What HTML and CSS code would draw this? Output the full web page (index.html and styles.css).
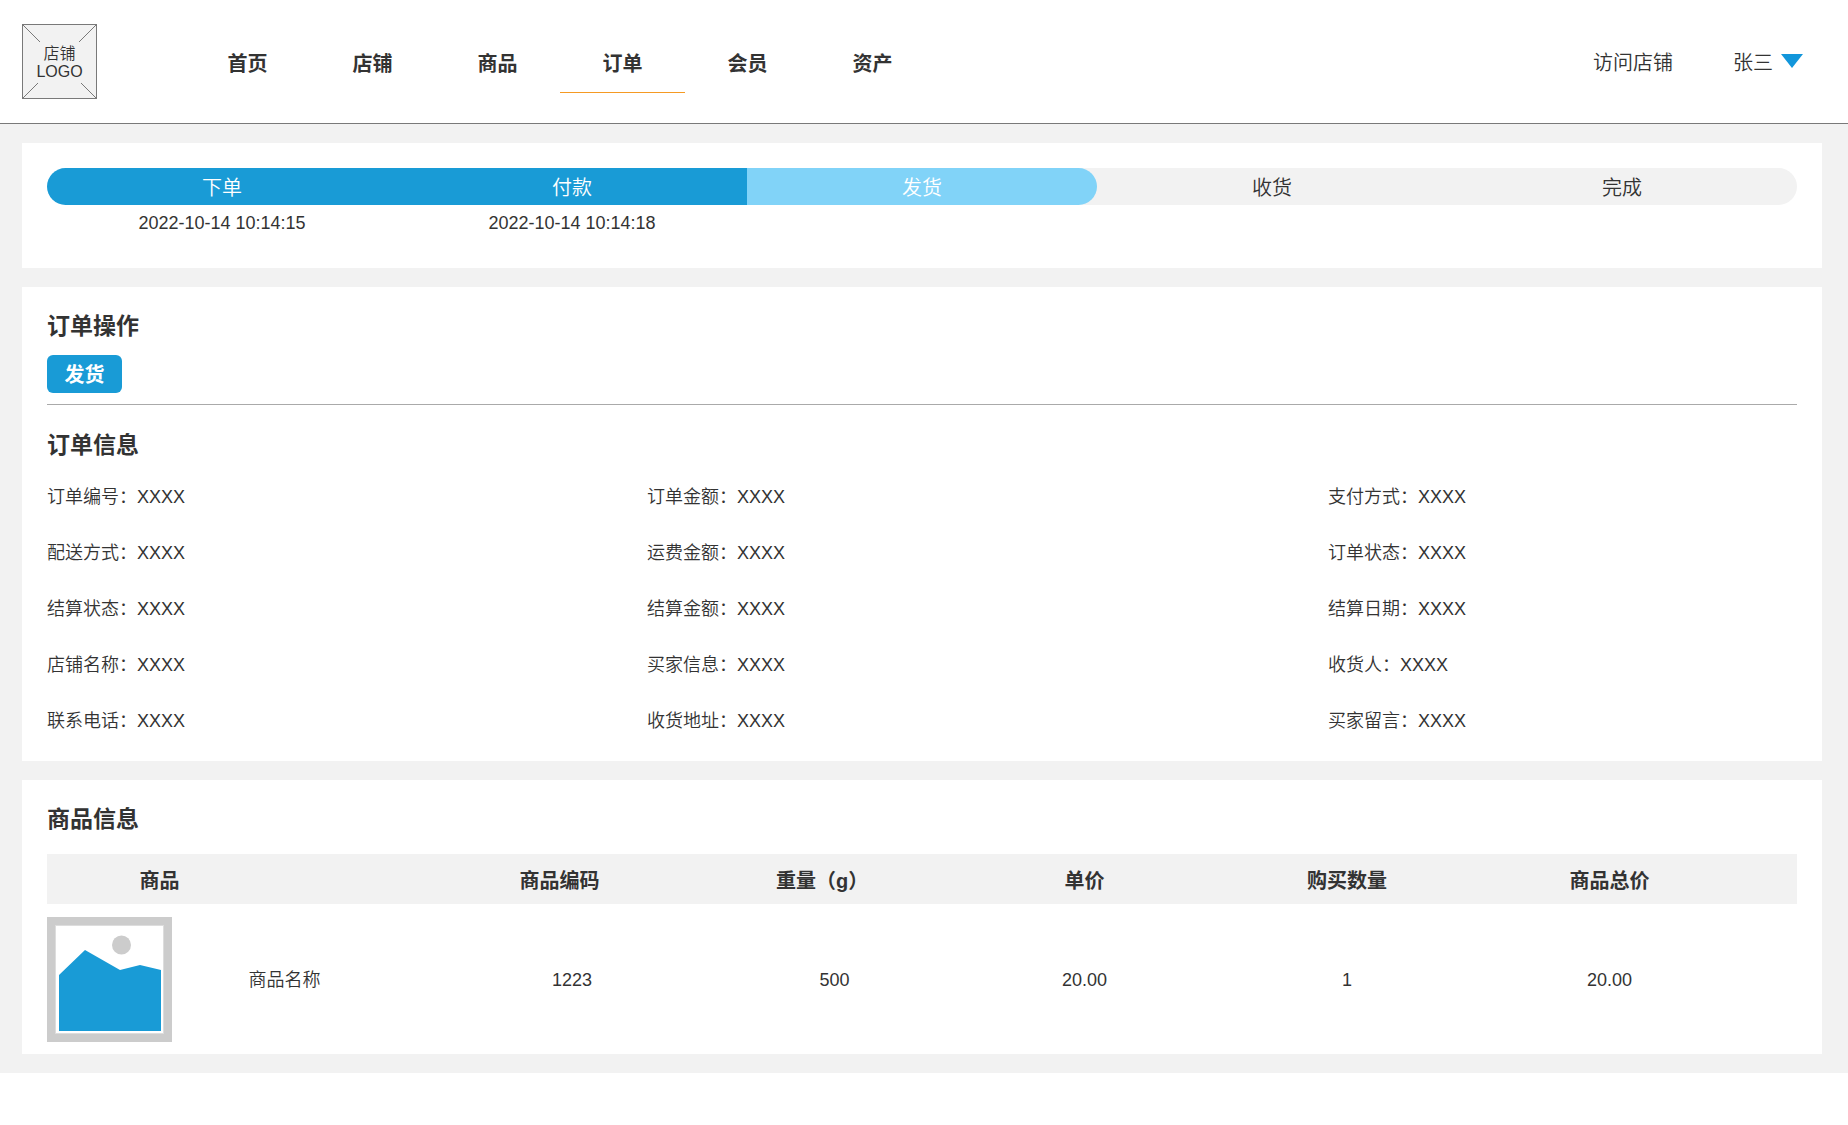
FILE: index.html
```html
<!DOCTYPE html>
<html lang="zh-CN">
<head>
<meta charset="utf-8">
<meta name="viewport" content="width=device-width, initial-scale=1">
<title>订单详情</title>
<link rel="stylesheet" href="styles.css">
</head>
<body>
<header class="header">
  <a class="logo" href="#">
    <svg class="logo__frame" viewBox="0 0 75 75" aria-hidden="true">
      <rect x="0.5" y="0.5" width="74" height="74" fill="#f2f2f2" stroke="#797979"/>
      <path d="M.5.5 18 18M74.500.5 57 18M.5 74.500 16 59M74.500 74.500 59 59" fill="none" stroke="#797979"/>
    </svg>
    <span class="logo__text">店铺<br>LOGO</span>
  </a>
  <nav class="nav">
    <a class="nav__link" href="#">首页</a>
    <a class="nav__link" href="#">店铺</a>
    <a class="nav__link" href="#">商品</a>
    <a class="nav__link nav__link--active" href="#" aria-current="page">订单</a>
    <a class="nav__link" href="#">会员</a>
    <a class="nav__link" href="#">资产</a>
  </nav>
  <div class="account">
    <a class="account__shop" href="#">访问店铺</a>
    <button class="account__user" type="button">张三
      <svg class="account__arrow" viewBox="0 0 22 14" aria-hidden="true"><path d="M0 0H22L11 14Z" fill="#1296db"/></svg>
    </button>
  </div>
</header>

<main class="main">
  <section class="card card--steps">
    <ol class="steps">
      <li class="step step--done"><div class="step__bar"><span class="step__name">下单</span></div><time class="step__time">2022-10-14 10:14:15</time></li>
      <li class="step step--done"><div class="step__bar"><span class="step__name">付款</span></div><time class="step__time">2022-10-14 10:14:18</time></li>
      <li class="step step--current"><div class="step__bar"><span class="step__name">发货</span></div></li>
      <li class="step"><div class="step__bar"><span class="step__name">收货</span></div></li>
      <li class="step"><div class="step__bar"><span class="step__name">完成</span></div></li>
    </ol>
  </section>

  <section class="card card--order">
    <div class="actions">
      <h2 class="title">订单操作</h2>
      <button class="button" type="button">发货</button>
    </div>
    <h2 class="title">订单信息</h2>
    <dl class="info">
      <div class="info__item"><dt>订单编号：</dt><dd>XXXX</dd></div>
      <div class="info__item"><dt>订单金额：</dt><dd>XXXX</dd></div>
      <div class="info__item"><dt>支付方式：</dt><dd>XXXX</dd></div>
      <div class="info__item"><dt>配送方式：</dt><dd>XXXX</dd></div>
      <div class="info__item"><dt>运费金额：</dt><dd>XXXX</dd></div>
      <div class="info__item"><dt>订单状态：</dt><dd>XXXX</dd></div>
      <div class="info__item"><dt>结算状态：</dt><dd>XXXX</dd></div>
      <div class="info__item"><dt>结算金额：</dt><dd>XXXX</dd></div>
      <div class="info__item"><dt>结算日期：</dt><dd>XXXX</dd></div>
      <div class="info__item"><dt>店铺名称：</dt><dd>XXXX</dd></div>
      <div class="info__item"><dt>买家信息：</dt><dd>XXXX</dd></div>
      <div class="info__item"><dt>收货人：</dt><dd>XXXX</dd></div>
      <div class="info__item"><dt>联系电话：</dt><dd>XXXX</dd></div>
      <div class="info__item"><dt>收货地址：</dt><dd>XXXX</dd></div>
      <div class="info__item"><dt>买家留言：</dt><dd>XXXX</dd></div>
    </dl>
  </section>

  <section class="card card--goods">
    <h2 class="title">商品信息</h2>
    <table class="goods">
      <colgroup>
        <col class="goods__col-image"><col class="goods__col-name"><col class="goods__col-code"><col class="goods__col-weight"><col class="goods__col-price"><col class="goods__col-count"><col class="goods__col-total"><col>
      </colgroup>
      <thead>
        <tr>
          <th class="goods__head-product" colspan="2" scope="colgroup">商品</th>
          <th class="goods__head-shifted" scope="col">商品编码</th>
          <th class="goods__head-shifted" scope="col">重量（g）</th>
          <th scope="col">单价</th>
          <th scope="col">购买数量</th>
          <th scope="col">商品总价</th>
          <td></td>
        </tr>
      </thead>
      <tbody>
        <tr>
          <td>
            <svg class="goods__image" viewBox="0 0 125 125" role="img" aria-label="商品图片">
              <rect width="125" height="125" fill="#ccc"/>
              <rect x="8.500" y="8.500" width="108" height="108" fill="#fff" stroke="#ddd"/>
              <circle cx="74.500" cy="28" r="9.500" fill="#ccc"/>
              <path d="M12 58 38 33 73 53 93 48 114 53V114H12Z" fill="#199bd6"/>
            </svg>
          </td>
          <td>商品名称</td>
          <td>1223</td>
          <td>500</td>
          <td>20.00</td>
          <td>1</td>
          <td>20.00</td>
          <td></td>
        </tr>
      </tbody>
    </table>
  </section>
</main>
</body>
</html>
```
FILE: styles.css
```css
* {
  box-sizing: border-box;
}

body {
  margin: 0;
  background: #fff;
  color: #333;
  font-family: "Liberation Sans", "Noto Sans CJK SC", sans-serif;
  font-size: 18px;
  font-weight: 350;
  line-height: 26px;
}

a {
  color: inherit;
  text-decoration: none;
}

button {
  border: 0;
  font: inherit;
  cursor: pointer;
}

h2,
ol,
dl,
dd {
  margin: 0;
  padding: 0;
}

/* Header */
.header {
  display: flex;
  align-items: center;
  padding: 24px 45px 24px 22px;
  border-bottom: 1px solid #797979;
}

.logo {
  display: grid;
  place-items: center;
  width: 75px;
  height: 75px;
  font-size: 16px;
  line-height: 18px;
  text-align: center;
}

.logo__frame,
.logo__text {
  grid-area: 1 / 1;
}

.logo__frame {
  width: 75px;
  height: 75px;
}

.logo__text {
  padding-top: 3px;
}

.nav {
  display: flex;
  margin-left: 88px;
}

.nav__link {
  width: 125px;
  padding: 18px 0 12px;
  border-bottom: 1px solid transparent;
  line-height: 32px;
  font-size: 20px;
  font-weight: 700;
  text-align: center;
}

.nav__link--active {
  border-color: #f59a23;
}

.account {
  display: flex;
  gap: 60px;
  margin-left: auto;
  padding-top: 3px;
  font-size: 20px;
}

.account__user {
  display: flex;
  gap: 8px;
  padding: 0;
  background: none;
  color: inherit;
}

.account__arrow {
  width: 22px;
  height: 14px;
  margin-top: 4px;
}

/* Page body */
.main {
  display: flex;
  flex-direction: column;
  gap: 19px;
  padding: 19px 26px 19px 22px;
  background: #f2f2f2;
}

.card {
  padding: 25px;
  background: #fff;
}

.title {
  font-size: 23px;
  font-weight: 700;
  line-height: 28px;
}

/* Progress */
.card--steps {
  padding-bottom: 32px;
}

.steps {
  display: flex;
  list-style: none;
}

.step {
  flex: 1;
  text-align: center;
}

.step__bar {
  overflow: hidden;
  background: #f2f2f2;
}

.step:first-child .step__bar {
  border-radius: 19px 0 0 19px;
}

.step:last-child .step__bar {
  border-radius: 0 19px 19px 0;
}

.step__name {
  display: block;
  padding-top: 3px;
  font-size: 20px;
  line-height: 34px;
}

.step--done .step__name {
  background: #199bd6;
  color: #fff;
}

.step--current .step__name {
  border-radius: 0 19px 19px 0;
  background: #81d3f8;
  color: #fff;
}

.step__time {
  display: block;
  padding-top: 6px;
  line-height: 25px;
}

/* Order */
.card--order {
  padding-bottom: 24px;
}

.actions {
  margin-bottom: 26px;
  padding-bottom: 11px;
  border-bottom: 1px solid #aaa;
}

.button {
  display: block;
  width: 75px;
  height: 38px;
  margin-top: 15px;
  padding: 2px 0 0;
  border-radius: 6px;
  background: #199bd6;
  color: #fff;
  font-size: 20px;
  font-weight: 700;
}

.info {
  display: grid;
  grid-template-columns: 600fr 681fr 469fr;
  row-gap: 30px;
  padding: 25px 0 3px;
}

.info__item {
  display: flex;
}

/* Goods */
.card--goods {
  padding-bottom: 0;
}

.goods {
  width: 100%;
  margin-top: 21px;
  border-collapse: collapse;
  table-layout: fixed;
  text-align: center;
}

.goods__col-image {
  width: 125px;
}

.goods__col-name {
  width: 12.86%;
}

.goods__col-code {
  width: 20%;
}

.goods__col-weight {
  width: 10%;
}

.goods__col-price,
.goods__col-total {
  width: 18.57%;
}

.goods__col-count {
  width: 11.43%;
}

.goods td,
.goods th {
  padding: 0;
}

.goods thead {
  background: #f2f2f2;
  font-size: 20px;
}

.goods thead th {
  padding-top: 4px;
  line-height: 46px;
}

.goods .goods__head-product {
  padding-right: 125px;
}

.goods .goods__head-shifted {
  padding-right: 25px;
}

.goods tbody td {
  padding: 13px 0 12px;
}

.goods__image {
  display: block;
  width: 125px;
  height: 125px;
}
```
